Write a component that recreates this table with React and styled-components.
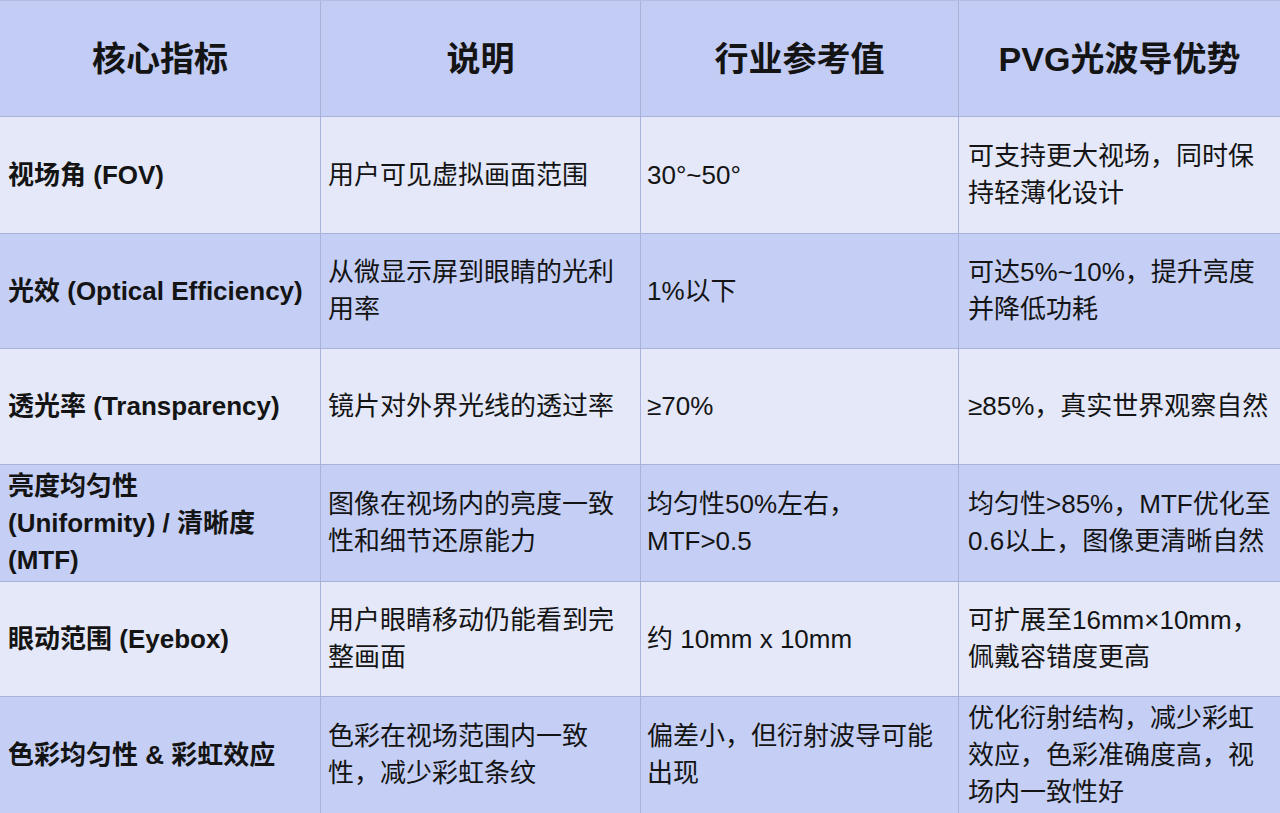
import React from "react";
import styled, { createGlobalStyle } from "styled-components";

const GlobalStyle = createGlobalStyle`
  html, body {
    margin: 0;
    padding: 0;
    background: #e4e8f7;
  }
  body {
    font-family: "Liberation Sans", "Noto Sans CJK SC", sans-serif;
    color: #141414;
  }
`;

const Table = styled.div`
  display: grid;
  grid-template-columns: 320px 319px 317px 1fr;
  grid-template-rows: 115px 116px 114px 115px 116px 114px 1fr;
  gap: 1px;
  width: 1280px;
  height: 813px;
  background: #a9b3d9;
  box-sizing: border-box;
  border-top: 1px solid #b4bde0;
`;

const HeadCell = styled.div`
  background: #c2ccf5;
  display: flex;
  align-items: center;
  justify-content: center;
  font-size: 34px;
  font-weight: 700;
  padding-bottom: 4px;
`;

const Cell = styled.div`
  background: ${(p) => (p.$dark ? "#c5cff5" : "#e4e8f8")};
  display: flex;
  align-items: center;
  padding: 0 8px 0 ${(p) => p.$pad || 7}px;
  font-size: 26px;
  font-weight: ${(p) => (p.$bold ? 700 : 400)};
  line-height: 37px;
  box-sizing: border-box;
  white-space: pre-line;
`;

const headers = ["核心指标", "说明", "行业参考值", "PVG光波导优势"];

const rows = [
  ["视场角 (FOV)", "用户可见虚拟画面范围", "30°~50°", "可支持更大视场，同时保持轻薄化设计"],
  ["光效 (Optical Efficiency)", "从微显示屏到眼睛的光利用率", "1%以下", "可达5%~10%，提升亮度并降低功耗"],
  ["透光率 (Transparency)", "镜片对外界光线的透过率", "≥70%", "≥85%，真实世界观察自然"],
  ["亮度均匀性\n(Uniformity) / 清晰度\n(MTF)", "图像在视场内的亮度一致性和细节还原能力", "均匀性50%左右，\nMTF>0.5", "均匀性>85%，MTF优化至0.6以上，图像更清晰自然"],
  ["眼动范围 (Eyebox)", "用户眼睛移动仍能看到完整画面", "约 10mm x 10mm", "可扩展至16mm×10mm，佩戴容错度更高"],
  ["色彩均匀性 & 彩虹效应", "色彩在视场范围内一致性，减少彩虹条纹", "偏差小，但衍射波导可能出现", "优化衍射结构，减少彩虹效应，色彩准确度高，视场内一致性好"],
];

const pads = [8, 7, 6, 9];

export default function App() {
  return (
    <>
      <GlobalStyle />
      <Table>
        {headers.map((h) => (
          <HeadCell key={h}>{h}</HeadCell>
        ))}
        {rows.map((r, i) =>
          r.map((c, j) => (
            <Cell key={`${i}-${j}`} $dark={i % 2 === 1} $bold={j === 0} $pad={pads[j]}>
              <span>{c}</span>
            </Cell>
          ))
        )}
      </Table>
    </>
  );
}
